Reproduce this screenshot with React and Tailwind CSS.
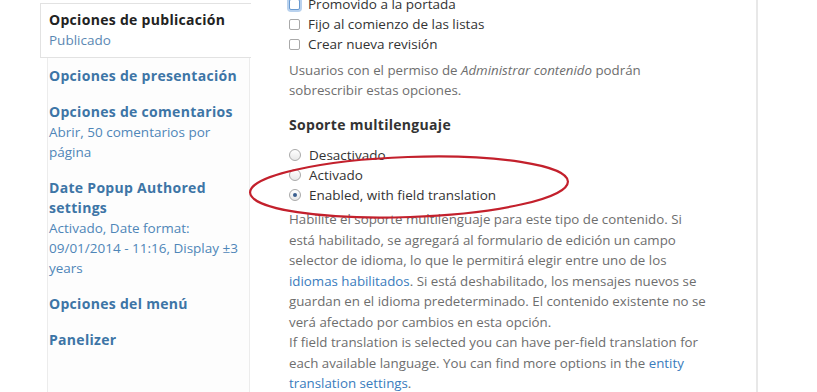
import React from "react";

const font = { fontFamily: '"Open Sans", "DejaVu Sans", sans-serif' };

const tabs = [
    { title: ["Opciones de presentación"] },
    { title: ["Opciones de comentarios"], summary: ["Abrir, 50 comentarios por", "página"] },
    {
        title: ["Date Popup Authored", "settings"],
        summary: ["Activado, Date format:", "09/01/2014 - 11:16, Display ±3", "years"],
    },
    { title: ["Opciones del menú"] },
    { title: ["Panelizer"] },
];

const Lines = ({ lines }) =>
    lines.map((l, i) => (
        <div key={i} className="whitespace-nowrap">
            {l}
        </div>
    ));

function Checkbox({ focus }) {
    return (
        <span
            className={
                "inline-block w-[11px] h-[11px] rounded-[2px] border bg-white shrink-0 " +
                (focus ? "border-[#6a9ad0] ring-2 ring-[#b9d2ee]" : "border-[#a9a9a9]")
            }
        />
    );
}

function Radio({ checked }) {
    return (
        <span className="inline-flex items-center justify-center w-[12px] h-[12px] rounded-full border border-[#a9a9a9] bg-gradient-to-b from-white to-[#e8e8e8] shrink-0">
            {checked && <span className="w-[4px] h-[4px] rounded-full bg-[#3a5f8f]" />}
        </span>
    );
}

export default function App() {
    return (
        <div className="relative w-[817px] h-[392px] overflow-hidden bg-white text-[13.5px]" style={font}>
            <div className="flex h-full">
                <div className="w-[40px] shrink-0" />
                <div className="w-[210px] shrink-0 flex flex-col">
                    <div className="mt-[3px] border border-r-0 border-[#e2e2e2] bg-white pl-[8px] pr-2 pt-[6px] pb-[7px] leading-[20px] relative z-10 w-[211px]">
                        <div className="font-bold text-[14px] text-[#222] tracking-[0.3px]">Opciones de publicación</div>
                        <div className="text-[#5b88b3]">Publicado</div>
                    </div>
                    <div className="flex-1 ml-[7px] border-l border-r border-[#ececec] bg-[#fdfdfd] pl-[1px] pr-2">
                        {tabs.map((t) => (
                            <div key={t.title[0]} className="py-[8px] leading-[20px]">
                                <div className="font-bold text-[14px] text-[#3d75a6] tracking-[0.3px]">
                                    <Lines lines={t.title} />
                                </div>
                                {t.summary && (
                                    <div className="text-[#4f86b8]">
                                        <Lines lines={t.summary} />
                                    </div>
                                )}
                            </div>
                        ))}
                    </div>
                </div>
                <div className="w-[508px] shrink-0 border-r-2 border-[#e8e8e8] pl-[39px] text-[#555]">
                    <div className="-mt-[6px] leading-[20px] text-[#333]">
                        <label className="flex items-center gap-[8px] h-[20px]">
                            <Checkbox focus />
                            <span>Promovido a la portada</span>
                        </label>
                        <label className="flex items-center gap-[8px] h-[20px]">
                            <Checkbox />
                            <span>Fijo al comienzo de las listas</span>
                        </label>
                        <label className="flex items-center gap-[8px] h-[20px]">
                            <Checkbox />
                            <span>Crear nueva revisión</span>
                        </label>
                    </div>
                    <p className="mt-[6px] leading-[20px] text-[13.3px] text-[#6e6e6e] whitespace-nowrap">
                        Usuarios con el permiso de <em>Administrar contenido</em> podrán
                        <br />
                        sobrescribir estas opciones.
                    </p>
                    <div className="mt-[15px] font-bold text-[14px] text-[#333] leading-[20px] tracking-[0.3px]">
                        Soporte multilenguaje
                    </div>
                    <div className="mt-[10px] leading-[20px] text-[#333]">
                        <label className="flex items-center gap-[8px] h-[20px]">
                            <Radio />
                            <span>Desactivado</span>
                        </label>
                        <label className="flex items-center gap-[8px] h-[20px]">
                            <Radio />
                            <span>Activado</span>
                        </label>
                        <label className="flex items-center gap-[8px] h-[20px]">
                            <Radio checked />
                            <span>Enabled, with field translation</span>
                        </label>
                    </div>
                    <p className="mt-[4px] leading-[20.5px] text-[13.3px] text-[#6e6e6e] whitespace-nowrap">
                        Habilite el soporte multilenguaje para este tipo de contenido. Si
                        <br />
                        está habilitado, se agregará al formulario de edición un campo
                        <br />
                        selector de idioma, lo que le permitirá elegir entre uno de los
                        <br />
                        <a className="text-[#3a7cbd]">idiomas habilitados</a>. Si está deshabilitado, los mensajes nuevos se
                        <br />
                        guardan en el idioma predeterminado. El contenido existente no se
                        <br />
                        verá afectado por cambios en esta opción.
                        <br />
                        If field translation is selected you can have per-field translation for
                        <br />
                        each available language. You can find more options in the{" "}
                        <a className="text-[#3a7cbd]">entity</a>
                        <br />
                        <a className="text-[#3a7cbd]">translation settings</a>.
                    </p>
                </div>
                <div className="flex-1 bg-white" />
            </div>
            <svg className="absolute left-0 top-0 pointer-events-none" width="817" height="392">
                <ellipse
                    cx="409"
                    cy="187"
                    rx="159"
                    ry="30"
                    transform="rotate(-2 409 187)"
                    fill="none"
                    stroke="#c3202c"
                    strokeWidth="2.2"
                />
            </svg>
        </div>
    );
}
